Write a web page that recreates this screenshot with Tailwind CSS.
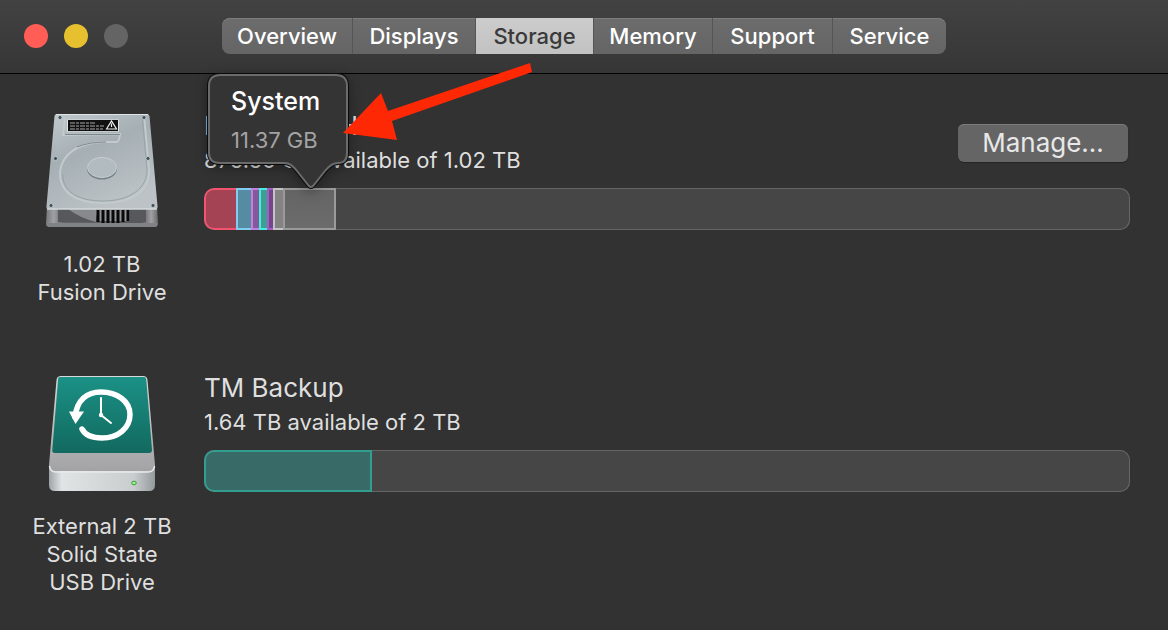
<!DOCTYPE html>
<html lang="en">
<head>
<meta charset="utf-8">
<meta name="viewport" content="width=device-width, initial-scale=1">
<title>About This Mac – Storage</title>
<script src="https://cdn.jsdelivr.net/npm/@tailwindcss/browser@4"></script>
</head>
<body class="min-h-screen bg-[#323232] font-['Inter','Liberation_Sans',sans-serif] text-[22px] leading-7 text-[#dfdfdf]">
<div class="relative min-h-screen overflow-hidden">
  <header class="grid grid-cols-[1fr_auto_1fr] items-start border-b border-black bg-linear-to-b from-[#424242] to-[#363636] pt-[18px] pb-[19px]">
    <div class="flex h-9 items-center gap-4 pl-6">
      <button aria-label="Close" class="size-6 rounded-full bg-[#ff5d55]"></button>
      <button aria-label="Minimize" class="size-6 rounded-full bg-[#e6c02f]"></button>
      <button aria-label="Zoom" disabled class="size-6 rounded-full bg-[#646464]"></button>
    </div>
    <nav class="flex h-9 divide-x divide-[#555555] overflow-hidden rounded-lg bg-linear-to-b from-[#6c6c6c] to-[#656565] text-[22px] font-medium text-white shadow-[inset_0_1px_0_#7d7d7d]">
      <button class="w-[131px]">Overview</button>
      <button class="w-[123px]">Displays</button>
      <button aria-current="page" class="w-[118px] bg-linear-to-b from-[#cccccc] to-[#c2c2c2] text-[#3a3a3a]">Storage</button>
      <button class="w-[119px]">Memory</button>
      <button class="w-[120px]">Support</button>
      <button class="w-[113px]">Service</button>
    </nav>
  </header>

  <main class="flex flex-col gap-16 pt-[34px]">
    <section class="flex pr-[38px]">
      <div class="flex w-[204px] shrink-0 flex-col items-center">
        <svg class="h-[124px] w-[120px]" viewBox="0 0 120 124" role="img" aria-label="Internal drive">
          <defs>
            <linearGradient id="hd" x1="0" y1="0" x2="0.5" y2="1"><stop offset="0" stop-color="#c1c9cd"/><stop offset=".45" stop-color="#a5afb4"/><stop offset="1" stop-color="#bcc2c6"/></linearGradient>
            <linearGradient id="hdf" x1="0" x2="1"><stop offset="0" stop-color="#77787b"/><stop offset=".07" stop-color="#a0a1a4"/><stop offset=".15" stop-color="#65666a"/><stop offset=".85" stop-color="#55565a"/><stop offset=".94" stop-color="#a0a0a4"/><stop offset="1" stop-color="#6a6a6d"/></linearGradient>
          </defs>
          <path d="M5 97H115L116 116Q116 119 112 119H8Q4 119 4 116Z" fill="url(#hdf)"/>
          <path d="M5 115H115V117Q115 119 112 119H8Q5 119 5 117Z" fill="#818286"/>
          <path d="M16 101H104V114H16Z" fill="#57585c"/>
          <path d="M26 101H54V114Q38 110 26 101Z" fill="#88898b"/>
          <path d="M53 102H88V113H56Z" fill="#929397"/>
          <path d="M56 102V114M61 102V115M66 102V115M71 102V115M76 102V115M81 102V114M86 102V113" stroke="#09090a" stroke-width="3"/>
          <path d="M15 6H105Q107 6 107.500 8L115.500 98Q116 101 113 101H7Q4 101 4.500 98L12.500 8Q13 6 15 6Z" fill="url(#hd)"/>
          <path d="M14 6.500H106" stroke="#dfe4e6"/>
          <path d="M5 101H115" stroke="#d5d8da" stroke-width="1.500"/>
          <path d="M102 7L107 62C108 82 91 95 61 95C32 95 17 83 18 64C20 45 38 34 63 34H75Q77 34 78 26L21 27L23 10" fill="none" stroke="#c3cacd" stroke-width="2"/>
          <path d="M100 7L105 61C106 79 89 93 61 93C34 93 20 82 21 66" fill="none" stroke="#98a3a8" stroke-width="1"/>
          <path d="M23 26.500H78M35 39Q47 34 64 34" stroke="#7d888e" fill="none"/>
          <path d="M25 11.500H77V23.500H25Z" fill="#e0e4e5"/>
          <path d="M26 12H76V23H26Z" fill="#111"/>
          <path d="M28 15H53M28 18H62M28 21H61" stroke="#aaa" stroke-dasharray="5 1 3 1"/>
          <path d="M64.500 21L69.500 13L74.500 21ZM69.500 15.500V19" fill="none" stroke="#eee" stroke-width="1.200"/>
          <ellipse cx="60" cy="61" rx="15" ry="10.500" fill="#76838a"/>
          <ellipse cx="60" cy="59.500" rx="14.500" ry="10" fill="#b2bbbf" stroke="#c9d0d3"/>
          <g fill="#3c5159" stroke="#d0d5d7" stroke-width=".7"><circle cx="18" cy="9.500" r="2"/><circle cx="102" cy="9.500" r="2"/><circle cx="13.500" cy="50.500" r="2"/><circle cx="106" cy="50.500" r="2"/><circle cx="9" cy="97.500" r="2"/><circle cx="111" cy="97.500" r="2"/></g>
        </svg>
        <p class="pt-[18px] text-center">1.02 TB<br>Fusion Drive</p>
      </div>
      <div class="min-w-0 flex-1">
        <div class="flex h-20 items-start justify-between">
          <div class="whitespace-nowrap">
            <h2 class="text-[26px] leading-9">Macintosh HD</h2>
            <p class="pt-[2px]">875.56 GB available of 1.02 TB</p>
          </div>
          <button class="mt-4 mr-[2px] h-[38px] w-[170px] rounded-md bg-[#656565] text-[26px] text-[#e8e8e8] shadow-[inset_0_1px_0_#7b7b7b,0_1px_1px_#252525]">Manage...</button>
        </div>
        <div class="relative">
          <div class="flex h-[42px] overflow-hidden rounded-[10px] bg-[#464646] shadow-[inset_0_0_0_1px_#666666]">
            <span class="w-8 rounded-l-[10px] border-2 border-r-0 border-[#f4536f] bg-[#a44354]"></span>
            <span class="w-[15px] border-2 border-r-0 border-[#7fcdf1] bg-[#568ca2]"></span>
            <span class="w-2 border-2 border-r-0 border-[#c480de] bg-[#85589a]"></span>
            <span class="w-2 border-2 border-r-0 border-[#47eee0] bg-[#3d9e95]"></span>
            <span class="w-[6px] border-2 border-r-0 border-[#a65cc5] bg-[#74448c]"></span>
            <span class="w-[10px] border-2 border-r-0 border-[#c3c3c3] bg-[#838383]"></span>
            <span class="w-[53px] border-2 border-[#9a9a9a] bg-linear-to-b from-[#646464] to-[#6c6c6c]"></span>
          </div>
          <div role="tooltip" class="absolute bottom-10 left-[3px] h-[117px] w-[142px]">
            <svg class="absolute inset-0 size-full overflow-visible drop-shadow-[0_3px_6px_rgba(0,0,0,0.35)]" viewBox="0 0 142 117" aria-hidden="true">
              <path d="M13 2H129Q140 2 140 13V80Q140 90 131 90C126 90 122 93 118 98L106 113Q104 115 102 113L90 98C86 93 83 90 77 90H13Q2 90 2 80V13Q2 2 13 2Z" fill="#343434" stroke="#0b0b0b" stroke-width="4"/>
              <path d="M13 2H129Q140 2 140 13V80Q140 90 131 90C126 90 122 93 118 98L106 113Q104 115 102 113L90 98C86 93 83 90 77 90H13Q2 90 2 80V13Q2 2 13 2Z" fill="#343434" stroke="#6b6b6b" stroke-width="2"/>
            </svg>
            <div class="relative flex flex-col pt-[10px] pl-6">
              <strong class="text-[25px] leading-9 font-medium text-white">System</strong>
              <span class="leading-[42px] text-[#a3a3a3]">11.37 GB</span>
            </div>
          </div>
        </div>
      </div>
    </section>

    <section class="flex pr-[38px]">
      <div class="flex w-[204px] shrink-0 flex-col items-center">
        <svg class="h-[124px] w-[120px]" viewBox="0 0 120 124" role="img" aria-label="Time Machine drive">
          <defs>
            <linearGradient id="tm" x1="0" y1="0" x2="0" y2="1"><stop offset="0" stop-color="#1b9185"/><stop offset="1" stop-color="#12695f"/></linearGradient>
            <linearGradient id="tmb" x1="0" y1="0" x2="0" y2="1"><stop offset="0" stop-color="#d7d9da"/><stop offset="1" stop-color="#a2a2a4"/></linearGradient>
            <linearGradient id="tmf" x1="0" x2="1"><stop offset="0" stop-color="#9ea3a5"/><stop offset=".12" stop-color="#e1e4e5"/><stop offset=".8" stop-color="#c9cdce"/><stop offset="1" stop-color="#94999b"/></linearGradient>
          </defs>
          <path d="M19 6H101Q105 6 105.500 10L113 95V102H7V95L14.500 10Q15 6 19 6Z" fill="url(#tmb)"/>
          <path d="M7 95Q8 101 14 101H106Q112 101 113 95V115Q113 121 107 121H13Q7 121 7 115Z" fill="url(#tmf)"/>
          <path d="M7.500 96Q8 102 14 102H106Q112 102 112.500 96" fill="none" stroke="#e8eaeb" stroke-width="1.500"/>
          <path d="M18 7H102Q104 7 104.300 10L110 80Q110 83 107 83H13Q10 83 10.300 80L16 10Q16 7 18 7Z" fill="url(#tm)"/>
          <path d="M33 47C35 30 45 22 59 22C75 22 88 31 88 44.500C88 58 76 68 60 68C50 68 43 65 40 59" fill="none" stroke="#fff" stroke-width="5.500" stroke-linecap="round"/>
          <path d="M27 41.500H42L33.500 54Z" fill="#fff"/>
          <path d="M59 28V45L69 53" fill="none" stroke="#fff" stroke-width="2" stroke-linecap="round" stroke-linejoin="round"/>
          <circle cx="59" cy="45" r="2.200" fill="#fff"/>
          <ellipse cx="92" cy="113" rx="2.300" ry="1.800" fill="#a2f294" stroke="#33a133"/>
        </svg>
        <p class="pt-[18px] text-center">External 2 TB<br>Solid State<br>USB Drive</p>
      </div>
      <div class="min-w-0 flex-1">
        <div class="h-20">
          <h2 class="text-[26px] leading-9">TM Backup</h2>
          <p class="pt-[2px]">1.64 TB available of 2 TB</p>
        </div>
        <div class="flex h-[42px] overflow-hidden rounded-[10px] bg-[#464646] shadow-[inset_0_0_0_1px_#666666]">
          <span class="w-[168px] rounded-l-[10px] border-2 border-[#339d90] bg-[#386b67]"></span>
        </div>
      </div>
    </section>
  </main>

  <svg class="pointer-events-none absolute top-[62px] left-[343px] h-[79px] w-[190px]" viewBox="0 0 190 79" aria-hidden="true">
    <path d="M0 71L38 31L45 49L187 1L189 10L49 59L54 78Z" fill="#ff2805"/>
  </svg>
</div>
</body>
</html>
